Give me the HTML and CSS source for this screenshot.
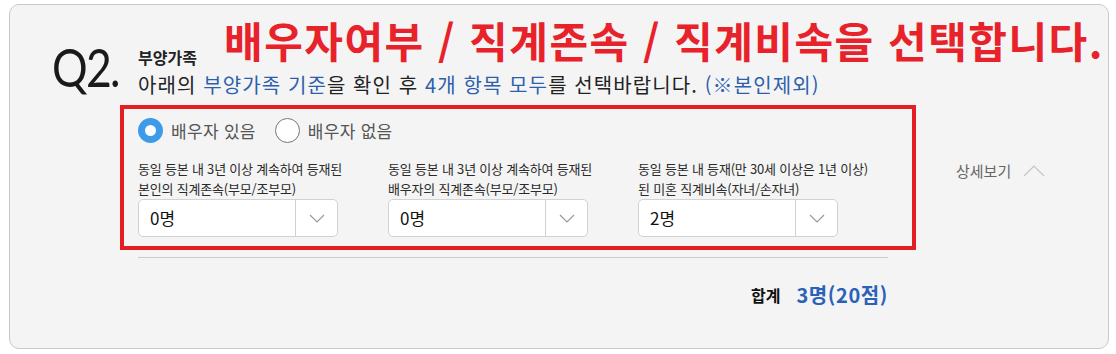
FILE: index.html
```html
<!DOCTYPE html>
<html lang="ko">
<head>
<meta charset="utf-8">
<title>Q2 부양가족</title>
<link rel="stylesheet" href="styles.css">
</head>
<body>
<div class="card">
  <div class="qcol"><span class="qnum">Q2.</span></div>
  <div class="main">
    <div class="label">부양가족</div>
    <div class="desc">아래의 <span class="blue">부양가족 기준</span>을 확인 후 <span class="blue">4개 항목 모두</span>를 선택바랍니다. <span class="blue">(※본인제외)</span></div>
    <div class="body-row">
      <div class="form">
        <div class="radios">
          <label class="radio"><span class="dot checked"></span><span class="rtext">배우자 있음</span></label>
          <label class="radio"><span class="dot"></span><span class="rtext">배우자 없음</span></label>
        </div>
        <div class="cols">
          <div class="col">
            <div class="clabel">동일 등본 내 3년 이상 계속하여 등재된<br>본인의 직계존속(부모/조부모)</div>
            <div class="select"><span class="sval">0명</span><span class="sbtn"><svg width="16" height="9" viewBox="0 0 16 9"><polyline points="1,1 8,8 15,1" fill="none" stroke="#9a9a9a" stroke-width="1.2"/></svg></span></div>
          </div>
          <div class="col">
            <div class="clabel">동일 등본 내 3년 이상 계속하여 등재된<br>배우자의 직계존속(부모/조부모)</div>
            <div class="select"><span class="sval">0명</span><span class="sbtn"><svg width="16" height="9" viewBox="0 0 16 9"><polyline points="1,1 8,8 15,1" fill="none" stroke="#9a9a9a" stroke-width="1.2"/></svg></span></div>
          </div>
          <div class="col">
            <div class="clabel">동일 등본 내 등재(만 30세 이상은 1년 이상)<br>된 미혼 직계비속(자녀/손자녀)</div>
            <div class="select"><span class="sval">2명</span><span class="sbtn"><svg width="16" height="9" viewBox="0 0 16 9"><polyline points="1,1 8,8 15,1" fill="none" stroke="#9a9a9a" stroke-width="1.2"/></svg></span></div>
          </div>
        </div>
      </div>
      <div class="detail"><span>상세보기</span><svg width="22" height="12" viewBox="0 0 22 12"><polyline points="1,11 11,1 21,11" fill="none" stroke="#c4c4c4" stroke-width="1.2"/></svg></div>
    </div>
    <div class="divider"></div>
    <div class="total"><span class="tlabel">합계</span><span class="tval">3명(20점)</span></div>
  </div>
  <div class="note-text">배우자여부 / 직계존속 / 직계비속을 선택합니다.</div>
  <div class="note-box"></div>
</div>
</body>
</html>
```
FILE: styles.css
```css
html, body {
  margin: 0;
  padding: 0;
  background: #ffffff;
}
body {
  font-family: "Noto Sans CJK KR", "Noto Sans", sans-serif;
  color: #222;
}
.card {
  position: relative;
  box-sizing: border-box;
  margin: 4px 0 0 9px;
  width: 1100px;
  height: 345px;
  border: 1px solid #c9c9c9;
  border-radius: 10px;
  background: #f4f4f4;
  display: flex;
}
.qcol {
  flex: 0 0 128px;
  box-sizing: border-box;
  padding-left: 42px;
  padding-top: 36px;
}
.qnum {
  display: inline-block;
  font-family: Lato, "Open Sans", sans-serif;
  font-weight: 400;
  font-size: 53px;
  line-height: 52px;
  color: #1a1a1a;
  letter-spacing: -2px;
  transform: scaleX(0.84);
  transform-origin: left center;
}
.main {
  display: flex;
  flex-direction: column;
  padding-top: 42px;
}
.label {
  font-size: 16px;
  line-height: 20px;
  font-weight: 700;
  color: #222;
}
.desc {
  margin-top: 5px;
  font-size: 20px;
  line-height: 26px;
  color: #222;
  letter-spacing: 1.1px;
}
.blue {
  color: #2d5fad;
}
.body-row {
  display: flex;
  align-items: flex-start;
  margin-top: 20px;
}
.form {
  width: 700px;
}
.radios {
  display: flex;
  align-items: center;
  height: 25px;
}
.radio {
  display: flex;
  align-items: center;
  margin-right: 19px;
}
.dot {
  box-sizing: border-box;
  width: 25px;
  height: 25px;
  border-radius: 50%;
  border: 1px solid #777;
  background: #fff;
}
.dot.checked {
  border: 7px solid #3d9be9;
}
.rtext {
  margin-left: 8px;
  font-size: 17px;
  line-height: 25px;
  color: #555;
  letter-spacing: 0.3px;
}
.cols {
  display: flex;
  gap: 50px;
  margin-top: 16px;
}
.col {
  width: 200px;
}
.clabel {
  font-size: 13px;
  line-height: 20px;
  color: #2a2a2a;
  white-space: nowrap;
  letter-spacing: -0.2px;
}
.select {
  box-sizing: border-box;
  height: 38px;
  display: flex;
  background: #fff;
  border: 1px solid #d2d2d2;
  border-radius: 5px;
}
.sval {
  flex: 1;
  padding-left: 11px;
  font-size: 17px;
  line-height: 36px;
  color: #111;
}
.sbtn {
  width: 41px;
  border-left: 1px solid #d2d2d2;
  display: flex;
  align-items: center;
  justify-content: center;
}
.detail {
  margin-left: 118px;
  margin-top: 43px;
  display: flex;
  align-items: center;
  gap: 12px;
  font-size: 15px;
  line-height: 20px;
  color: #666;
}
.divider {
  width: 750px;
  height: 1px;
  margin-top: 20px;
  background: #cccccc;
}
.total {
  width: 750px;
  margin-top: 25px;
  display: flex;
  justify-content: flex-end;
  align-items: center;
  gap: 16px;
  line-height: 24px;
}
.tlabel {
  font-size: 16px;
  font-weight: 700;
  color: #111;
}
.tval {
  font-size: 20px;
  font-weight: 700;
  color: #2a62b8;
  letter-spacing: 0.6px;
}
.note-text {
  position: absolute;
  left: 214px;
  top: 14px;
  font-size: 42px;
  line-height: 42px;
  font-weight: 700;
  color: #e8222b;
  white-space: nowrap;
  letter-spacing: 1.5px;
}
.note-box {
  position: absolute;
  left: 110px;
  top: 100px;
  width: 796px;
  height: 145px;
  box-sizing: border-box;
  border: 4px solid #e31e25;
}
```
